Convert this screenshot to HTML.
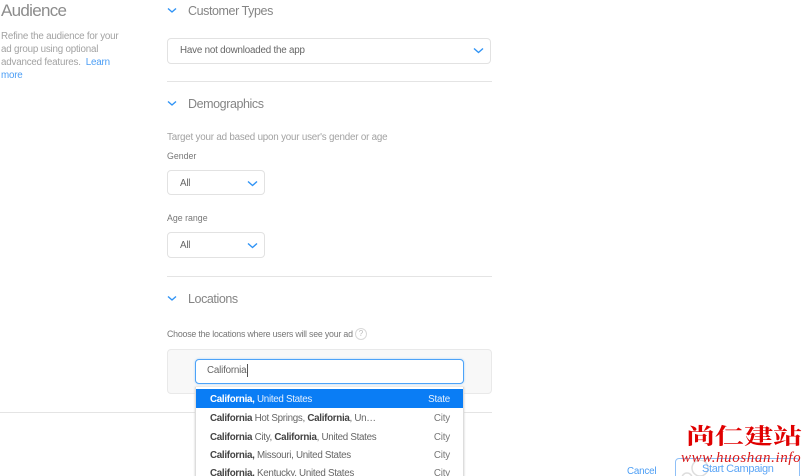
<!DOCTYPE html>
<html style="overflow:hidden;height:476px;"><head><meta charset="utf-8">
<style>
html,body{margin:0;padding:0;background:#fff;}
body{width:806px;height:476px;font-family:"Liberation Sans",sans-serif;}
#w{position:relative;width:806px;height:476px;overflow:hidden;}
.t{position:absolute;white-space:nowrap;line-height:1;}
.l{font-family:"Liberation Sans",sans-serif;}
.s{font-size:9.8px;letter-spacing:-0.2px;}
.h{font-size:12.5px;letter-spacing:-0.42px;color:#858585;}
.m{font-size:8.8px;color:#777;}
.box{position:absolute;box-sizing:border-box;background:#fff;border:1px solid #e2e2e2;border-radius:4px;}
.hr{position:absolute;height:1px;background:#e4e4e4;}
svg{position:absolute;}
.row{position:absolute;left:196px;width:267px;height:19px;}
.row .a{position:absolute;left:14px;top:4px;font:9.8px/13px "Liberation Sans",sans-serif;letter-spacing:-0.3px;color:#666;white-space:nowrap;}
.row .a b{color:#444;font-weight:bold;}
.row .b{position:absolute;right:13px;top:4px;font:9.8px/13px "Liberation Sans",sans-serif;letter-spacing:-0.2px;color:#777;}
</style></head><body><div id="w">

<div class="t l" style="left:1px;top:2px;font-size:17px;letter-spacing:-0.7px;color:#8c8c8c;">Audience</div>
<div class="t l s" style="left:1px;top:30px;line-height:13px;color:#a2a2a2;">Refine the audience for your<br>ad group using optional<br>advanced features.&nbsp; <span style="color:#4a9df5;">Learn</span><br><span style="color:#4a9df5;">more</span></div>

<svg style="left:167px;top:7px" width="10" height="7"><path d="M1 1.5L5 5L9 1.5" fill="none" stroke="#2f93f5" stroke-width="1.4"/></svg>
<div class="t l h" style="left:188px;top:5px;">Customer Types</div>

<div class="box" style="left:167px;top:38px;width:324px;height:26px;"></div>
<div class="t l s" style="left:180px;top:46px;color:#666;">Have not downloaded the app</div>
<svg style="left:473px;top:47px" width="11" height="7"><path d="M1 1.5L5.5 5.5L10 1.5" fill="none" stroke="#2f93f5" stroke-width="1.4"/></svg>

<div class="hr" style="left:167px;top:81px;width:325px;"></div>

<svg style="left:167px;top:100px" width="10" height="7"><path d="M1 1.5L5 5L9 1.5" fill="none" stroke="#2f93f5" stroke-width="1.4"/></svg>
<div class="t l h" style="left:188px;top:98px;">Demographics</div>

<div class="t l s" style="left:167px;top:133px;color:#a2a2a2;">Target your ad based upon your user's gender or age</div>
<div class="t l m" style="left:167px;top:152px;">Gender</div>

<div class="box" style="left:167px;top:170px;width:98px;height:25px;"></div>
<div class="t l s" style="left:180px;top:179px;color:#666;">All</div>
<svg style="left:247px;top:180px" width="11" height="7"><path d="M1 1.5L5.5 5.5L10 1.5" fill="none" stroke="#2f93f5" stroke-width="1.4"/></svg>

<div class="t l m" style="left:167px;top:214px;">Age range</div>

<div class="box" style="left:167px;top:232px;width:98px;height:26px;"></div>
<div class="t l s" style="left:180px;top:241px;color:#666;">All</div>
<svg style="left:247px;top:242px" width="11" height="7"><path d="M1 1.5L5.5 5.5L10 1.5" fill="none" stroke="#2f93f5" stroke-width="1.4"/></svg>

<div class="hr" style="left:167px;top:276px;width:325px;"></div>

<svg style="left:167px;top:295px" width="10" height="7"><path d="M1 1.5L5 5L9 1.5" fill="none" stroke="#2f93f5" stroke-width="1.4"/></svg>
<div class="t l h" style="left:188px;top:293px;">Locations</div>

<div class="t l m" style="left:167px;top:330px;letter-spacing:-0.2px;">Choose the locations where users will see your ad</div>
<div style="position:absolute;left:355px;top:328px;width:10px;height:10px;border:1px solid #d8d8d8;border-radius:50%;font:8px/10px 'Liberation Sans',sans-serif;color:#bbb;text-align:center;">?</div>

<div class="box" style="left:167px;top:349px;width:325px;height:45px;background:#f8f8f8;border-color:#e9e9e9;"></div>
<div class="box" style="left:195px;top:359px;width:269px;height:25px;border:1.5px solid #4da3f8;box-shadow:0 0 2px #a9d2fa;"></div>
<div class="t l s" style="left:207px;top:366px;color:#666;">California</div>
<div style="position:absolute;left:247px;top:364px;width:1px;height:13px;background:#555;"></div>

<div class="hr" style="left:0;top:412px;width:492px;"></div>

<div style="position:absolute;box-sizing:border-box;left:195px;top:387px;width:269px;height:100px;background:#fff;border-left:1px solid #ddd;border-right:1px solid #ddd;box-shadow:0 0 2px #ccc;"></div>
<div class="row" style="top:389px;background:#0a7df5;"><span class="a" style="color:#e6f1fe;"><b style="color:#fff;">California,</b> United States</span><span class="b" style="color:#e6f1fe;">State</span></div>
<div class="row" style="top:408px;"><span class="a"><b>California</b> Hot Springs, <b>California</b>, Un…</span><span class="b">City</span></div>
<div class="row" style="top:427px;"><span class="a"><b>California</b> City, <b>California</b>, United States</span><span class="b">City</span></div>
<div class="row" style="top:445px;"><span class="a"><b>California,</b> Missouri, United States</span><span class="b">City</span></div>
<div class="row" style="top:463px;"><span class="a"><b>California,</b> Kentucky, United States</span><span class="b">City</span></div>

<div class="t l s" style="left:627px;top:467px;color:#4a9df5;">Cancel</div>
<div style="position:absolute;box-sizing:border-box;left:675px;top:458px;width:125px;height:30px;border:1.5px solid #8fc0f7;border-radius:4px;"></div>
<svg style="left:678px;top:460px" width="50" height="16"><circle cx="22" cy="8" r="8" fill="none" stroke="#ddd" stroke-width="1.5"/><circle cx="9" cy="18" r="5" fill="none" stroke="#ddd" stroke-width="1.5"/></svg>
<div class="t l" style="left:702px;top:464px;font-size:11px;letter-spacing:-0.35px;color:#5da6f6;">Start Campaign</div>

<div class="t" style="left:686px;top:425px;font:bold 22px/1 'Noto Serif CJK SC','Noto Sans CJK SC',serif;color:#e00000;white-space:nowrap;transform:scaleX(1.32);transform-origin:left top;">尚仁建站</div>
<div class="t" style="left:681px;top:451px;font:italic 15px/1 'Liberation Serif',serif;color:#d81818;letter-spacing:0.6px;">www.huoshan.info</div>

</div></body></html>
